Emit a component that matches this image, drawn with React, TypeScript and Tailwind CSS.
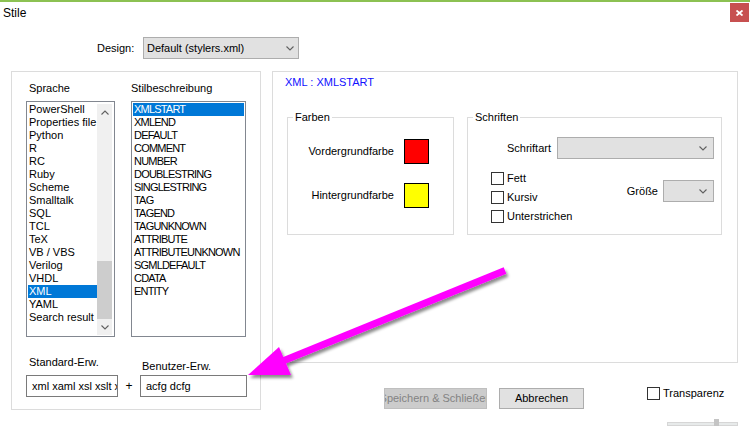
import React from "react";

const langs = [
  "PowerShell",
  "Properties file",
  "Python",
  "R",
  "RC",
  "Ruby",
  "Scheme",
  "Smalltalk",
  "SQL",
  "TCL",
  "TeX",
  "VB / VBS",
  "Verilog",
  "VHDL",
  "XML",
  "YAML",
  "Search result",
];

const styleNames = [
  "XMLSTART",
  "XMLEND",
  "DEFAULT",
  "COMMENT",
  "NUMBER",
  "DOUBLESTRING",
  "SINGLESTRING",
  "TAG",
  "TAGEND",
  "TAGUNKNOWN",
  "ATTRIBUTE",
  "ATTRIBUTEUNKNOWN",
  "SGMLDEFAULT",
  "CDATA",
  "ENTITY",
];

function Chevron({ up = false }: { up?: boolean }) {
  return (
    <svg width="8" height="5" viewBox="0 0 8 5" className="block">
      <polyline
        points={up ? "0.5,4.5 4,1 7.5,4.5" : "0.5,0.5 4,4 7.5,0.5"}
        fill="none"
        stroke="#606060"
        strokeWidth="1.1"
      />
    </svg>
  );
}

function Combo({ w, text, pr }: { w: string; text?: string; pr: string }) {
  return (
    <div
      className={`${w} h-[22px] flex items-center justify-between border border-[#adadad] bg-[#e1e1e1] pl-[3px] ${pr}`}
    >
      <span className="whitespace-nowrap">{text ?? ""}</span>
      <Chevron />
    </div>
  );
}

function Check({ label }: { label: string }) {
  return (
    <div className="flex h-[13px] items-center">
      <span className="w-[13px] h-[13px] border border-[#333333] bg-white shrink-0" />
      <span className="ml-[3px] whitespace-nowrap">{label}</span>
    </div>
  );
}

function GroupBox({
  title,
  className,
  children,
}: {
  title: string;
  className: string;
  children: React.ReactNode;
}) {
  return (
    <div className={`relative border border-[#dcdcdc] ${className}`}>
      <span className="absolute left-[5px] -top-[7px] bg-white px-[2px] leading-[13px]">
        {title}
      </span>
      {children}
    </div>
  );
}

export default function App() {
  return (
    <div className="relative w-[750px] h-[426px] overflow-hidden bg-white text-black text-[11px] leading-[13px] font-['Liberation_Sans',Arial,sans-serif]">
      {/* top accent line */}
      <div className="h-[2px] bg-[#8cc152]" />

      {/* title bar */}
      <div className="flex h-[23px] items-start justify-between">
        <span className="ml-[3px] mt-[4px] text-[12px] leading-[14px]">Stile</span>
        <div className="mt-[1px] mr-[1px] w-[19px] h-[19px] bg-[#c75050] flex items-center justify-center">
          <svg width="7" height="6" viewBox="0 0 7 6">
            <path d="M0.5 0.5 L6.5 5.5 M6.5 0.5 L0.5 5.5" stroke="#ffffff" strokeWidth="1.8" />
          </svg>
        </div>
      </div>

      {/* design row */}
      <div className="mt-[12px] flex h-[22px] items-center pl-[97px]">
        <span className="w-[46px]">Design:</span>
        <Combo w="w-[156px]" text="Default (stylers.xml)" pr="pr-[4px]" />
      </div>

      {/* main area */}
      <div className="mt-[12px] flex pl-[11px] gap-[11px]">
        {/* left group */}
        <div className="w-[250px] h-[339px] border border-[#dcdcdc] pl-[14px] pt-[10px]">
          <div className="flex">
            {/* language column */}
            <div className="w-[89px]">
              <div className="pl-[3px] h-[13px]">Sprache</div>
              <div className="mt-[6px] h-[236px] border border-[#828790] flex">
                <div className="flex-1 pl-[1px] pt-[1px]">
                  {langs.map((l) => (
                    <div
                      key={l}
                      className={`h-[13px] pl-[1px] whitespace-nowrap overflow-hidden ${
                        l === "XML" ? "bg-[#0078d7] text-white" : ""
                      }`}
                    >
                      {l}
                    </div>
                  ))}
                </div>
                <div className="w-[15px] mt-[2px] mb-[1px] mr-[2px] bg-[#f0f0f0] flex flex-col">
                  <div className="h-[17px] flex items-center justify-center">
                    <Chevron up />
                  </div>
                  <div className="flex-1 flex flex-col justify-end">
                    <div className="h-[58px] bg-[#cdcdcd]" />
                  </div>
                  <div className="h-[16px] flex items-center justify-center">
                    <Chevron />
                  </div>
                </div>
              </div>
            </div>

            {/* style column */}
            <div className="ml-[16px] w-[115px]">
              <div className="h-[13px]">Stilbeschreibung</div>
              <div className="mt-[6px] h-[236px] border border-[#828790] px-[1px] pt-[1px]">
                {styleNames.map((s) => (
                  <div
                    key={s}
                    className={`h-[13px] pl-[1px] whitespace-nowrap overflow-hidden tracking-[-0.8px] ${
                      s === "XMLSTART" ? "bg-[#0078d7] text-white" : ""
                    }`}
                  >
                    {s}
                  </div>
                ))}
              </div>
            </div>
          </div>

          {/* extensions */}
          <div className="mt-[19px] flex items-end">
            <div className="w-[92px] flex flex-col">
              <span className="pl-[3px] mb-[6px] whitespace-nowrap">Standard-Erw.</span>
              <div className="h-[22px] border border-[#7a7a7a] pl-[5px] flex items-center overflow-hidden whitespace-nowrap">
                xml xaml xsl xslt xsd
              </div>
            </div>
            <div className="w-[22px] h-[22px] flex items-center justify-center text-[12px]">+</div>
            <div className="w-[107px] flex flex-col">
              <span className="pl-[2px] mb-[2px] whitespace-nowrap">Benutzer-Erw.</span>
              <div className="h-[22px] border border-[#7a7a7a] pl-[5px] flex items-center overflow-hidden whitespace-nowrap">
                acfg dcfg
              </div>
            </div>
          </div>
        </div>

        {/* right column */}
        <div className="w-[466px] flex flex-col">
          <div className="h-[292px] border border-[#dcdcdc] pt-[4px]">
            <div className="pl-[12px] text-[#1010ff]">XML : XMLSTART</div>
            <div className="mt-[28px] pl-[14px] flex gap-[13px]">
              <GroupBox title="Farben" className="w-[167px] h-[118px] flex flex-col items-end pr-[24px] pt-[21px]">
                <div className="flex items-center gap-[10px]">
                  <span>Vordergrundfarbe</span>
                  <span className="w-[25px] h-[25px] border border-black bg-[#ff0000]" />
                </div>
                <div className="mt-[19px] flex items-center gap-[10px]">
                  <span>Hintergrundfarbe</span>
                  <span className="w-[25px] h-[25px] border border-black bg-[#ffff00]" />
                </div>
              </GroupBox>

              <GroupBox title="Schriften" className="w-[255px] h-[118px] pt-[19px]">
                <div className="flex items-center justify-end gap-[6px] pr-[7px]">
                  <span>Schriftart</span>
                  <Combo w="w-[157px]" pr="pr-[6px]" />
                </div>
                <div className="mt-[13px] flex items-start pl-[23px] pr-[7px]">
                  <div className="flex flex-col gap-[6px]">
                    <Check label="Fett" />
                    <Check label="Kursiv" />
                    <Check label="Unterstrichen" />
                  </div>
                  <div className="ml-auto mt-[8px] flex items-center gap-[5px]">
                    <span>Größe</span>
                    <Combo w="w-[51px]" pr="pr-[6px]" />
                  </div>
                </div>
              </GroupBox>
            </div>
          </div>

          {/* bottom buttons */}
          <div className="mt-[24px] flex items-start">
            <div className="ml-[112px] mt-[1px] w-[103px] h-[21px] border border-[#bfbfbf] bg-[#cccccc] text-[#838383] flex items-center justify-center overflow-hidden whitespace-nowrap">
              Speichern &amp; Schließen
            </div>
            <div className="ml-[12px] mt-[1px] w-[85px] h-[21px] border border-[#adadad] bg-[#e1e1e1] flex items-center justify-center whitespace-nowrap">
              Abbrechen
            </div>
            <div className="ml-[63px] flex flex-col">
              <Check label="Transparenz" />
              <div className="relative ml-[20px] mt-[19px] w-[71px] h-[8px]">
                <div className="mt-[3px] h-[4px] border border-[#d6d6d6] bg-[#e7eaea]" />
                <div className="absolute left-[47px] top-0 w-[5px] h-[10px] bg-[#c4c4c4]" />
              </div>
            </div>
          </div>
        </div>
      </div>

      {/* magenta annotation arrow */}
      <svg
        className="absolute left-0 top-0 pointer-events-none"
        width="750"
        height="426"
        viewBox="0 0 750 426"
      >
        <defs>
          <filter id="arrowShadow" x="-20%" y="-40%" width="140%" height="180%">
            <feDropShadow dx="2" dy="3" stdDeviation="1.6" floodColor="#000000" floodOpacity="0.45" />
          </filter>
        </defs>
        <g filter="url(#arrowShadow)">
          <line x1="505" y1="270.5" x2="284" y2="360.5" stroke="#ff00ff" strokeWidth="7" />
          <polygon points="248,375 279,347 291,375" fill="#ff00ff" />
        </g>
      </svg>
    </div>
  );
}
